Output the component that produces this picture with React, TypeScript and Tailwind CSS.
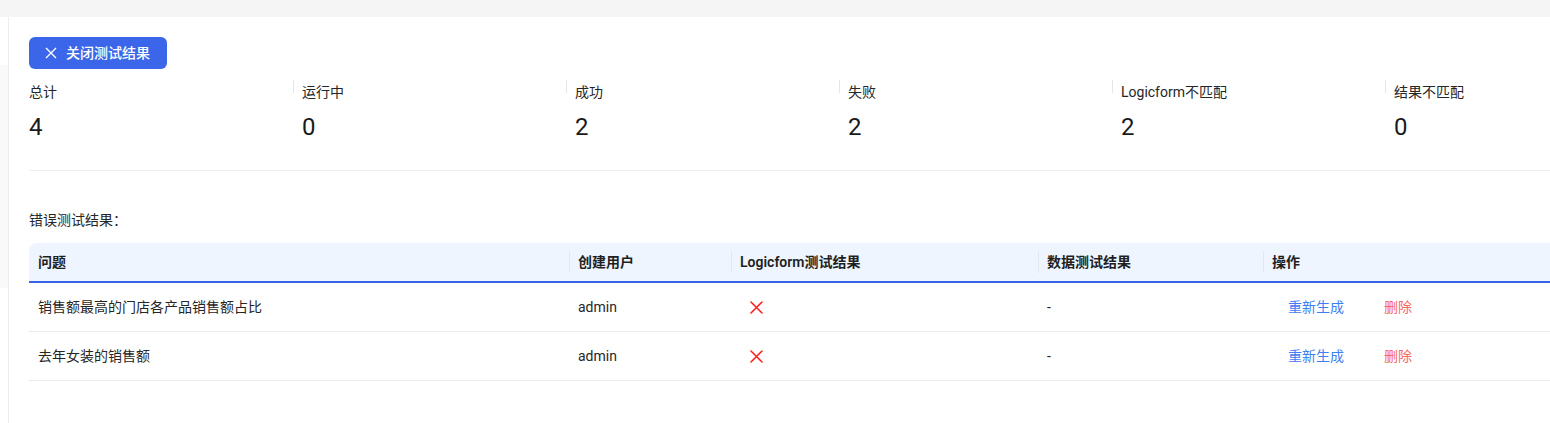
import React from "react";

const stats = [
  { label: "总计", value: "4" },
  { label: "运行中", value: "0" },
  { label: "成功", value: "2" },
  { label: "失败", value: "2" },
  { label: "Logicform不匹配", value: "2" },
  { label: "结果不匹配", value: "0" },
];

const rows = [
  { q: "销售额最高的门店各产品销售额占比", user: "admin" },
  { q: "去年女装的销售额", user: "admin" },
];

function RedX() {
  return (
    <svg width="13" height="13" viewBox="0 0 13 13" className="block">
      <path d="M1 1 L12 12 M12 1 L1 12" stroke="#ff1f1f" strokeWidth="1.6" strokeLinecap="round" fill="none" />
    </svg>
  );
}

function HeaderSep() {
  return <div className="w-px h-[22px] bg-[#e3e8f0]" />;
}

export default function App() {
  return (
    <div
      className="w-[1550px] h-[423px] overflow-hidden bg-white text-[#1f1f1f]"
      style={{ fontFamily: 'Roboto, "Noto Sans CJK SC", sans-serif' }}
    >
      <div className="h-[17px] bg-[#f5f5f5]" />
      <div className="flex h-[406px]">
        <div className="w-[9px] shrink-0 border-r border-[#ededed] flex flex-col">
          <div className="h-[48px] bg-white" />
          <div className="h-[223px] bg-[#f9f9f9]" />
        </div>
        <div className="flex-1 min-w-0 pl-[20px] pt-[20px]">
          <button className="flex items-center h-[32px] w-[138px] rounded-[6px] bg-[#3b66e9] pl-[16px] text-white">
            <svg width="12" height="12" viewBox="0 0 12 12" className="block">
              <path d="M1 1 L11 11 M11 1 L1 11" stroke="white" strokeWidth="1.4" fill="none" />
            </svg>
            <span className="ml-[9px] text-[14px] leading-[20px] font-medium">关闭测试结果</span>
          </button>

          <div className="flex mt-[11px] w-[1700px]">
            {stats.map((s, i) => (
              <div key={s.label} className={i === 0 ? "w-[264px] shrink-0" : "w-[273px] shrink-0 flex"}>
                {i > 0 && <div className="w-px h-[13px] bg-[#e5e5e5] shrink-0" />}
                <div className={i > 0 ? "ml-[8px]" : ""}>
                  <div className="text-[14px] leading-[22px] mt-[1px] text-[#262626]">{s.label}</div>
                  <div className="text-[24px] leading-[32px] mt-[8px] text-[#1a1a1a]">{s.value}</div>
                </div>
              </div>
            ))}
          </div>

          <div className="mt-[27px] h-px bg-[#efefef] w-[1700px]" />

          <div className="mt-[39px] text-[14px] leading-[20px] text-[#262626]">错误测试结果：</div>

          <div className="mt-[13px] w-[1700px] text-[14px]">
            <div className="flex items-center h-[40px] bg-[#eef5ff] border-b-2 border-[#3761e6] rounded-tl-[8px] font-semibold text-[#1f1f1f]">
              <div className="w-[540px] shrink-0 pl-[9px]">问题</div>
              <HeaderSep />
              <div className="w-[161px] shrink-0 pl-[8px]">创建用户</div>
              <HeaderSep />
              <div className="w-[306px] shrink-0 pl-[8px]">Logicform测试结果</div>
              <HeaderSep />
              <div className="w-[224px] shrink-0 pl-[8px]">数据测试结果</div>
              <HeaderSep />
              <div className="pl-[8px]">操作</div>
            </div>
            {rows.map((r) => (
              <div key={r.q} className="flex items-center h-[49px] border-b border-[#ebebeb] text-[#262626]">
                <div className="w-[540px] shrink-0 pl-[9px]">{r.q}</div>
                <div className="w-[162px] shrink-0 pl-[9px]">{r.user}</div>
                <div className="w-[307px] shrink-0 pl-[19px]">
                  <RedX />
                </div>
                <div className="w-[225px] shrink-0 pl-[9px]">-</div>
                <div className="pl-[25px] flex">
                  <span className="text-[#3d80f5]">重新生成</span>
                  <span className="ml-[40px] text-[#f4685f]">删除</span>
                </div>
              </div>
            ))}
          </div>
        </div>
      </div>
    </div>
  );
}
